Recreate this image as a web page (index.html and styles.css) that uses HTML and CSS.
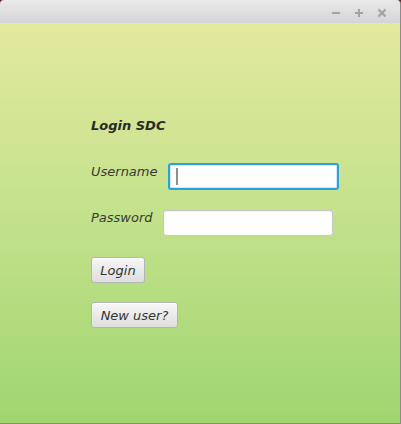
FILE: index.html
```html
<!DOCTYPE html>
<html>
<head>
<meta charset="utf-8">
<link rel="stylesheet" href="styles.css">
</head>
<body>
<div class="window">
  <div class="titlebar">
    <svg class="tb-icon" width="10" height="10" viewBox="0 0 10 10"><rect x="1" y="4" width="8" height="2" fill="#a3a3a3"/></svg>
    <svg class="tb-icon" width="10" height="10" viewBox="0 0 10 10"><rect x="1" y="4" width="8" height="2" fill="#a3a3a3"/><rect x="4" y="1" width="2" height="8" fill="#a3a3a3"/></svg>
    <svg class="tb-icon" width="10" height="10" viewBox="0 0 10 10"><path d="M1.5 1.5 L8.5 8.5 M8.5 1.5 L1.5 8.5" stroke="#a3a3a3" stroke-width="2.2"/></svg>
  </div>
  <div class="content">
    <div class="heading">Login SDC</div>
    <div class="row row-user">
      <label class="label label-user">Username</label>
      <div class="input focused"><span class="caret"></span></div>
    </div>
    <div class="row row-pass">
      <label class="label">Password</label>
      <div class="input"></div>
    </div>
    <button class="btn btn-login">Login</button>
    <button class="btn btn-new">New user?</button>
  </div>
</div>
</body>
</html>
```
FILE: styles.css
```css
html, body {
  margin: 0;
  padding: 0;
  background: #5a2424;
}
.window {
  width: 401px;
  height: 424px;
  box-sizing: border-box;
  border-right: 1px solid #8c8c8c;
  border-bottom: 1px solid #8c8c8c;
  border-radius: 4px 4px 0 0;
  overflow: hidden;
  display: flex;
  flex-direction: column;
  font-family: "DejaVu Sans", sans-serif;
  font-size: 13px;
  color: #333333;
}
.titlebar {
  height: 23px;
  flex: none;
  background: linear-gradient(#e9e9e9, #d5d5d5);
  display: flex;
  align-items: center;
  justify-content: flex-end;
  gap: 13px;
  padding-right: 13px;
  padding-top: 3px;
  box-sizing: border-box;
}
.tb-icon {
  display: block;
}
.content {
  flex: 1;
  background: linear-gradient(#e3e99f, #c9e38f 40%, #9fd670);
  padding: 95px 0 0 91px;
  display: flex;
  flex-direction: column;
  align-items: flex-start;
}
.heading {
  font-weight: bold;
  font-style: italic;
  line-height: 15px;
  color: #2a2a2a;
}
.row {
  display: flex;
  align-items: flex-start;
  gap: 10px;
}
.row-user {
  margin-top: 30px;
}
.row-pass {
  margin-top: 20px;
}
.label {
  font-style: italic;
  line-height: 15px;
  color: #383838;
}
.label-user {
  padding-top: 1px;
}
.input {
  width: 170px;
  height: 26px;
  box-sizing: border-box;
  background: #ffffff;
  border: 1px solid #c6c6c6;
  border-radius: 3px;
  box-shadow: inset 0 1px 1px rgba(0,0,0,0.06);
}
.input.focused {
  width: 171px;
  height: 27px;
  border: 2px solid #2da1d9;
  box-shadow: inset 0 0 0 1px #cfe9f6;
  position: relative;
}
.caret {
  position: absolute;
  left: 6px;
  top: 3px;
  width: 2px;
  height: 17px;
  background: #8f8f8f;
}
.btn {
  font-family: "DejaVu Sans", sans-serif;
  font-size: 13px;
  font-style: italic;
  color: #333333;
  height: 26px;
  padding: 0 8px;
  border: 1px solid #b5b5b5;
  border-radius: 3px;
  background: linear-gradient(#f7f7f7, #dedede);
  box-shadow: inset 0 1px 0 #ffffff;
  margin: 0;
}
.btn-login {
  margin-top: 21px;
  width: 54px;
}
.btn-new {
  margin-top: 19px;
  width: 87px;
}
```
